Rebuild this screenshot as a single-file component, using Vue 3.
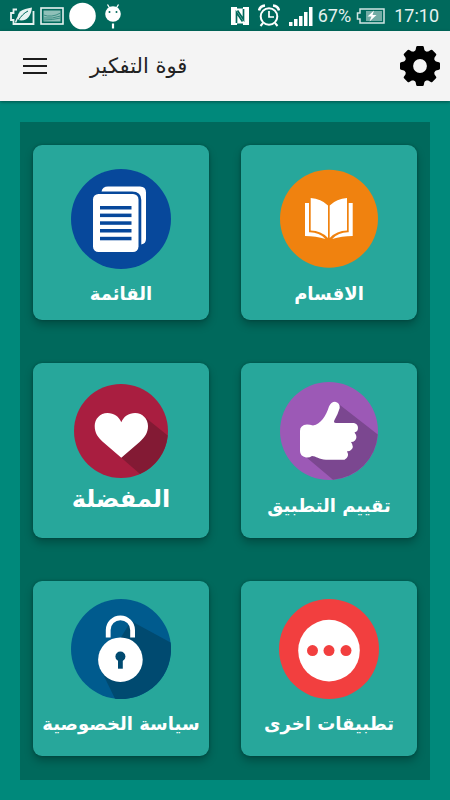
<script setup>
const cards = [
  { id: 'list', label: 'القائمة', row: 'first' },
  { id: 'sections', label: 'الاقسام', row: 'first' },
  { id: 'favorites', label: 'المفضلة', row: 'next', large: true },
  { id: 'rate', label: 'تقييم التطبيق', row: 'next' },
  { id: 'privacy', label: 'سياسة الخصوصية', row: 'next' },
  { id: 'more', label: 'تطبيقات اخرى', row: 'next' },
]
const teeth = [0, 45, 90, 135, 180, 225, 270, 315]
const textLines = [37, 44.6, 52.3, 60, 67.8]
</script>

<template>
  <div class="screen">
    <div class="status">
      <div class="group left">
        <svg width="26" height="22" viewBox="0 0 26 22" fill="none" stroke="#e6f2f0">
          <path d="M8 4.500H4.500V8H2v7h2.500v4h20V6" stroke-width="1.8" />
          <path d="M6.500 17.500c1-3 2-5 4-7" stroke-width="1.5" />
          <path d="M9 15C7 7 13 4 23 2.500 22 11 18 17 9 15z" fill="#e6f2f0" stroke="none" />
          <path d="M9 16C12 11 15 8 19 6" stroke="#00695c" stroke-width="1" />
        </svg>
        <svg width="24" height="20" viewBox="0 0 24 20">
          <rect x="1" y="2" width="22" height="16" fill="#00695c" stroke="#e6f2f0" stroke-width="1.6" />
          <rect x="3.5" y="4.5" width="17" height="11" fill="#8fc0b8" />
          <path d="M3.5 9q8 3 17-2M3.5 12q9 1 17-2M3.5 14q9 0 17-2" stroke="#3e8f85" fill="none" />
        </svg>
        <svg width="28" height="28" viewBox="0 0 28 28"><circle cx="13.500" cy="14" r="13.300" fill="#fff" /></svg>
        <svg width="20" height="26" viewBox="0 0 20 26">
          <path d="M5.500 1.500l3 5M16.500 1.500l-3 5" stroke="#fff" stroke-width="1.300" />
          <circle cx="11" cy="11" r="7.800" fill="#fff" />
          <circle cx="7.500" cy="9" r="1" fill="#00695c" /><circle cx="14.500" cy="9" r="1" fill="#00695c" />
          <path d="M11 20.500v5" stroke="#fff" stroke-width="2.200" />
        </svg>
      </div>
      <div class="group right">
        <svg width="18" height="20" viewBox="0 0 18 20">
          <rect y="1" width="18" height="18" fill="#fff" />
          <path d="M5.500 17V6.500L11.500 15.500M12.500 3V13.500L6.500 4.500" fill="none" stroke="#00695c" stroke-width="1.700" />
          <path d="M6 1h6v1.500H6zM6 17.500h6V19H6z" fill="#00695c" />
        </svg>
        <svg class="alarm" width="22" height="24" viewBox="0 0 22 24" fill="none" stroke="#fff">
          <circle cx="11" cy="12.500" r="8.300" stroke-width="2" />
          <path d="M11 7v6h5" stroke-width="1.700" />
          <path d="M1 6.500Q2 2 7 1.500M21 6.500Q20 2 15 1.500" stroke-width="2.600" />
          <path d="M5 19l-2.500 3M17 19l2.500 3" stroke-width="2" />
        </svg>
        <svg width="24" height="20" viewBox="0 0 24 20" fill="#fff">
          <rect x="0" y="16" width="3.500" height="4" /><rect x="5" y="13" width="3.500" height="7" /><rect x="10" y="10" width="3.500" height="10" /><rect x="15" y="6" width="3.500" height="14" /><rect x="20" y="1" width="3.500" height="19" />
        </svg>
        <span>67%</span>
        <svg width="30" height="18" viewBox="0 0 30 18">
          <path d="M4 2h24v14H4v-4H1.500V6H4z" fill="none" stroke="#cfe5e2" stroke-width="1.500" />
          <rect x="10" y="4" width="16" height="10" fill="#72aca5" />
          <path d="M18 3.500l-6.500 6h4l-2 5 7-6.500h-4z" fill="#fff" />
        </svg>
        <span class="time">17:10</span>
      </div>
    </div>

    <header class="appbar">
      <button class="icon-button" type="button" aria-label="القائمة الجانبية">
        <svg width="24" height="18" viewBox="0 0 24 18"><path d="M0 2h24M0 9h24M0 16h24" stroke="#1c1c1c" stroke-width="2.200" /></svg>
      </button>
      <h1 dir="rtl">قوة التفكير</h1>
      <button class="icon-button" type="button" aria-label="الإعدادات">
        <svg width="40" height="40" viewBox="-20 -20 40 40">
          <circle r="11.200" fill="none" stroke="#000" stroke-width="8.600" />
          <path v-for="a in teeth" :key="a" :transform="`rotate(${a})`" d="M-2.600-20H2.600Q3.600-20 3.800-19L4.400-16 7-13H-7L-4.400-16-3.800-19Q-3.600-20-2.600-20z" />
        </svg>
      </button>
    </header>

    <main>
      <nav class="panel">
        <button v-for="c in cards" :key="c.id" type="button" class="card" :class="[c.row, { large: c.large }]">
          <svg width="100" height="100" viewBox="0 0 100 100" aria-hidden="true">
            <g v-if="c.id === 'list'">
              <circle cx="50" cy="50" r="50" fill="#07489b" />
              <path d="M30.500 22.500Q31.500 17.500 37 17.500H69Q75 17.500 75 23.500V70Q75 74.500 70.300 75.500V31Q70.300 22.500 61 22.500z" fill="#fff" />
              <rect x="22" y="25" width="45.500" height="58" rx="5.500" fill="#fff" />
              <rect v-for="y in textLines" :key="y" x="29" :y="y" width="31.500" height="3.500" fill="#07489b" />
            </g>
            <g v-else-if="c.id === 'sections'">
              <circle cx="50" cy="49.700" r="49" fill="#f0820f" />
              <g fill="#fff">
                <path d="M31.700 29Q42 29.500 49 36.500V69Q42 61.500 31.700 61.500z" />
                <path d="M68 29Q57.700 29.500 50.700 36.500V69Q57.700 61.500 68 61.500z" />
                <path d="M26 34H30V63.300Q40 63 46.500 70Q37 67 26 67z" />
                <path d="M73.700 34H69.700V63.300Q59.700 63 53.200 70Q62.700 67 73.700 67z" />
              </g>
            </g>
            <g v-else-if="c.id === 'favorites'">
              <circle cx="50" cy="50" r="47" fill="#a91e40" />
              <path d="M75 37L96.700 54.500A47 47 0 0 1 69 93L50.300 76.700z" fill="#831a34" />
              <path d="M50.300 76.700L32 61C27 56.500 23.700 52 23.700 45C23.700 38 29 32 36.500 32C43 32 48 35.500 50.300 41.300C52.600 35.500 57.600 32 64.100 32C71.600 32 77 38 77 45C77 52 73.600 56.500 68.600 61z" fill="#fff" />
            </g>
            <g v-else-if="c.id === 'rate'">
              <circle cx="50" cy="50" r="49" fill="#9c59b6" />
              <path d="M59 22.500L98.800 53.500A49 49 0 0 1 54 98.800L27 76z" fill="#7b4790" />
              <path d="M34 44.500C42 43 47 35 50 25.500Q52 20.700 56 20.700Q61 21.500 60.700 27Q59 33 55.500 39Q54 42 57 42H75Q79 43 79 47Q79 50.500 75.500 51.500Q79 56 76 59.500Q74.500 61 72 61Q75.500 66 72 69Q70.500 70.500 68 70.300Q71 76 65.500 78.700H47C40 78.700 37 75 33 75Q30 77 27 76.500Q21 75 21 70V50Q21 44 28 43.500Q31 43.500 34 44.500z" fill="#fff" />
            </g>
            <g v-else-if="c.id === 'privacy'">
              <circle cx="50" cy="50" r="50" fill="#005b8e" />
              <path d="M60 22L99.600 43.500A50 50 0 0 1 44 99.700L30 71z" fill="#004a70" />
              <path d="M37.200 38.500V31A12.200 12.200 0 0 1 61.600 31V38.500" fill="none" stroke="#fff" stroke-width="4.800" />
              <circle cx="49.400" cy="60.700" r="22.300" fill="#fff" />
              <circle cx="49.400" cy="57.500" r="5" fill="#004a70" />
              <path d="M47 58h4.800v11.700H47z" fill="#004a70" />
            </g>
            <g v-else>
              <circle cx="50" cy="50" r="50" fill="#f23f3f" />
              <circle cx="50" cy="51.600" r="30.800" fill="#fff" />
              <circle v-for="x in [33.5, 50, 67]" :key="x" :cx="x" cy="51.600" r="5.500" fill="#f23f3f" />
            </g>
          </svg>
          <span class="label" dir="rtl">{{ c.label }}</span>
        </button>
      </nav>
    </main>
  </div>
</template>

<style>
body {
  background: #00897b;
}
</style>

<style scoped>
.screen {
  min-height: 100vh;
  background: #00897b;
  font-family: 'DejaVu Sans', sans-serif;
}
.status {
  display: flex;
  align-items: center;
  justify-content: space-between;
  height: 31px;
  padding: 0 11px 0 9px;
  background: #00695c;
  color: #e6f2f0;
  font: 18px/31px Roboto, sans-serif;
}
.group {
  display: flex;
  align-items: center;
}
.left {
  gap: 5px;
}
.right {
  gap: 5px;
}
.alarm {
  margin: 0 4px;
}
.time {
  margin-left: 3px;
}
.appbar {
  display: flex;
  align-items: center;
  height: 70px;
  padding: 0 10px 0 23px;
  box-sizing: border-box;
  background: #f4f4f4;
  box-shadow: 0 1px 3px rgba(0, 0, 0, 0.4);
}
.icon-button {
  display: flex;
  padding: 0;
  border: 0;
  background: none;
}
h1 {
  margin: 0 auto 0 43px;
  color: #222;
  font-size: 21px;
  font-weight: 400;
  line-height: 32px;
}
main {
  padding: 21px 20px 20px;
}
.panel {
  display: grid;
  grid-template-columns: 1fr 1fr;
  gap: 43px 32px;
  padding: 23px 13px 24px;
  background: #00695c;
}
.card {
  display: flex;
  flex-direction: column;
  align-items: center;
  gap: 9px;
  min-width: 0;
  min-height: 175px;
  padding: 18px 0 0;
  border: 0;
  border-radius: 9px;
  background: #27a79b;
  box-shadow: 0 5px 9px rgba(0, 0, 0, 0.25), 0 0 3px rgba(0, 0, 0, 0.25);
  color: #fff;
  font-family: inherit;
}
.first {
  padding-top: 24px;
}
.label {
  font-size: 18px;
  font-weight: 700;
  line-height: 32px;
  white-space: nowrap;
}
.large {
  gap: 2px;
}
.large .label {
  font-size: 24px;
}
</style>
